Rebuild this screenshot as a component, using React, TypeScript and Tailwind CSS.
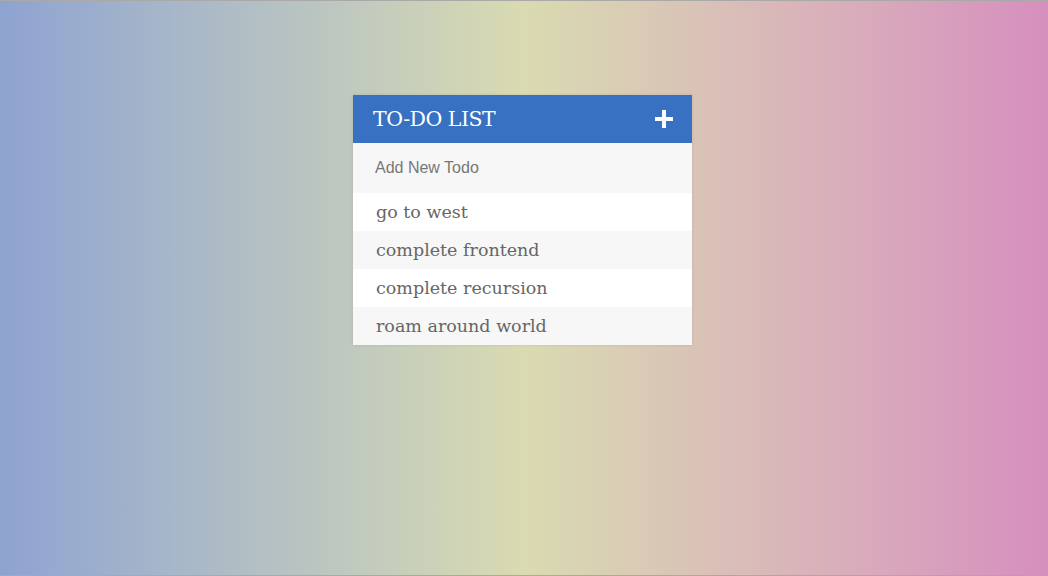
import React from 'react';

const todos = ['go to west', 'complete frontend', 'complete recursion', 'roam around world'];

export default function App() {
  return (
    <div className="flex h-[576px] w-full justify-center bg-gradient-to-r from-[#8fa3d1] via-[#d9dbb1] to-[#d68fbe] border-y border-[#a9aaa8] pt-[94px] pr-[3px]">
      <div className="h-fit w-[339px] shadow-[0_0_3px_rgba(0,0,0,0.1)]">
        <div className="flex h-[48px] items-center justify-between bg-[#3871c1] pl-5 pr-[18px] text-white">
          <h1 className="font-['DejaVu_Serif',serif] text-[20.5px] tracking-tight">TO-DO LIST</h1>
          <svg width="20" height="20" viewBox="0 0 20 20">
            <path d="M10 1v18M1 10h18" stroke="white" strokeWidth="4" />
          </svg>
        </div>
        <div className="flex h-[50px] items-center bg-[#f7f7f7] px-[22px]">
          <input
            placeholder="Add New Todo"
            className="w-full bg-transparent font-['Liberation_Sans',sans-serif] text-[16px] text-[#666] placeholder-[#777] outline-none"
          />
        </div>
        <ul>
          {todos.map((t, i) => (
            <li
              key={t}
              className={`flex h-[38px] items-center px-[23px] font-['DejaVu_Serif',serif] text-[17.5px] text-[#666] ${i % 2 ? 'bg-[#f7f7f7]' : 'bg-white'}`}
            >
              {t}
            </li>
          ))}
        </ul>
      </div>
    </div>
  );
}
